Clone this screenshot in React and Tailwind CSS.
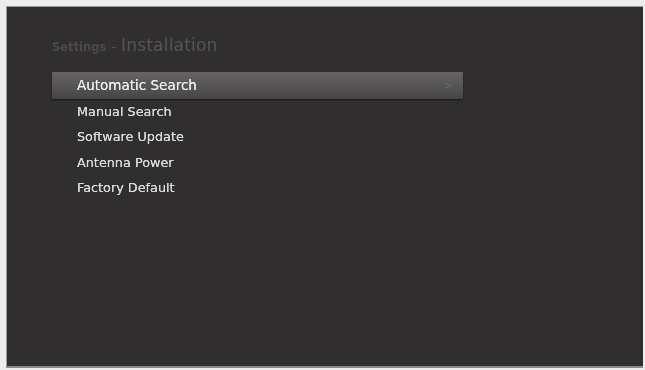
export default function App() {
  const items = ['Manual Search', 'Software Update', 'Antenna Power', 'Factory Default'];
  return (
    <div className="w-[645px] h-[370px] bg-[#ededed] pt-[6px] pl-[6px] pr-[2px] pb-[2px]" style={{ fontFamily: '"DejaVu Sans", "Open Sans", sans-serif' }}>
      <div className="w-full h-full bg-[#302e2f] border-t border-l border-[#9a9a9a] border-b-2 border-b-[#8a8a8a] relative">
        <div className="pt-[26px] pl-[45px] flex items-baseline gap-[5px]">
          <span className="text-[11.5px] text-[#4c4a4b] font-bold blur-[0.4px]">Settings</span>
          <span className="text-[13px] text-[#555354] blur-[0.4px]">-</span>
          <span className="text-[17px] text-[#575556] blur-[0.4px] tracking-[0.2px]">Installation</span>
        </div>
        <div className="mt-[13px] ml-[45px] w-[411px]">
          <div className="h-[27px] rounded-[1px] flex items-center justify-between pl-[25px] pr-[10px] bg-gradient-to-b from-[#656364] to-[#474546] shadow-[0_1px_2px_rgba(0,0,0,0.5)]">
            <span className="text-[13.5px] text-[#ededed] blur-[0.3px] [text-shadow:0_0_0.6px_#ededed]">Automatic Search</span>
            <span className="text-[10px] text-[#6e6c6d] blur-[0.5px]">&gt;</span>
          </div>
          <div className="pl-[25px] flex flex-col">
            {items.map(t => (
              <div key={t} className="h-[25.5px] flex items-center text-[12.8px] text-[#dcdcdc] blur-[0.3px] [text-shadow:0_0_0.6px_#dcdcdc]">{t}</div>
            ))}
          </div>
        </div>
      </div>
    </div>
  );
}
